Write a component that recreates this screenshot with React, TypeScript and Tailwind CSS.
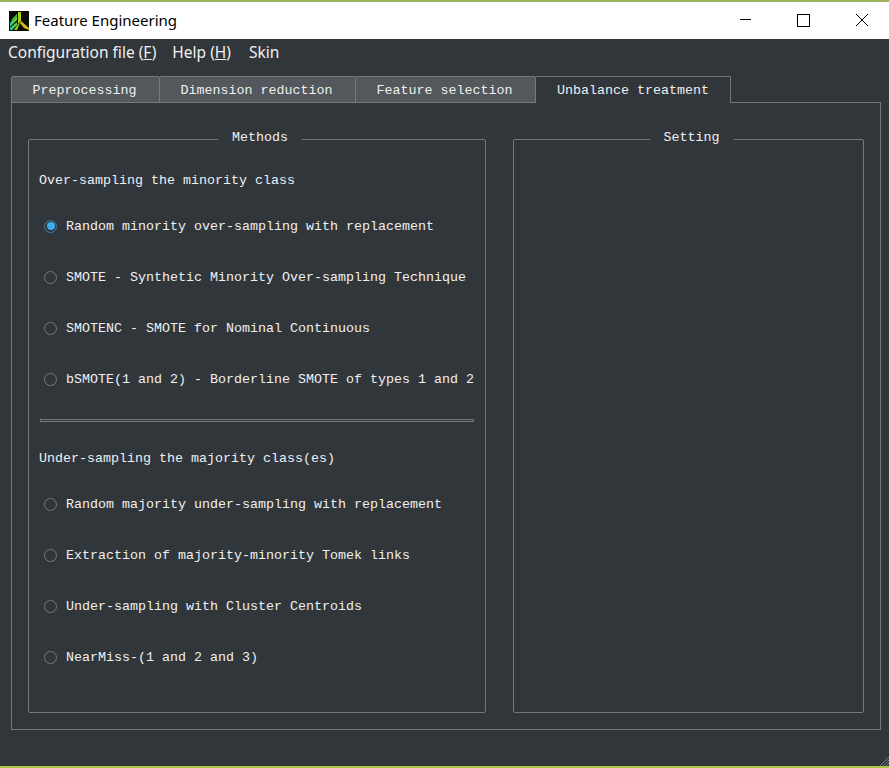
const monoFont = "font-['Liberation_Mono',monospace]";

const minorityOptions = [
  'Random minority over-sampling with replacement',
  'SMOTE - Synthetic Minority Over-sampling Technique',
  'SMOTENC - SMOTE for Nominal Continuous',
  'bSMOTE(1 and 2) - Borderline SMOTE of types 1 and 2',
];

const majorityOptions = [
  'Random majority under-sampling with replacement',
  'Extraction of majority-minority Tomek links',
  'Under-sampling with Cluster Centroids',
  'NearMiss-(1 and 2 and 3)',
];

const tabs = ['Preprocessing', 'Dimension reduction', 'Feature selection'];

function Logo() {
  return (
    <svg width="20" height="20" viewBox="0 0 20 20" className="shrink-0">
      <defs>
        <linearGradient id="fan" x1="0" y1="1" x2="1" y2="0">
          <stop offset="0" stopColor="#12c9a0" />
          <stop offset="1" stopColor="#7fd61e" />
        </linearGradient>
      </defs>
      <rect width="20" height="20" fill="#0c0c06" />
      <path d="M1 12 L8 5 L8 9 L1 16 Z" fill="url(#fan)" />
      <path d="M1 17 L8 11 L8 14 L3 19 L1 19 Z" fill="url(#fan)" />
      <path d="M3 8 L8 3 L8 5 L2 11 Z" fill="#39c83a" />
      <path d="M9 1 L12 1 L12 10 L9 13 Z" fill="#b4cc16" />
      <path d="M12 10 L20 17 L20 19 L15 17 L11 12 Z" fill="#d8b91c" />
      <path d="M9 13 L11 12 L8 19 L5 19 Z" fill="#8ccf1b" />
    </svg>
  );
}

function TitleBar() {
  return (
    <div className="flex h-[39px] items-center border-t-2 border-[#9cb45a] bg-white text-black">
      <div className="ml-[9px]">
        <Logo />
      </div>
      <span className="ml-[5px] font-['Noto_Sans',sans-serif] text-[15px]">Feature Engineering</span>
      <div className="mr-[4px] mb-[1px] ml-auto flex items-center gap-[12px]">
        <svg width="46" height="20" viewBox="0 0 46 20">
          <path d="M17 9.5 H28" stroke="#000" strokeWidth="1" fill="none" />
        </svg>
        <svg width="46" height="20" viewBox="0 0 46 20">
          <rect x="16.5" y="4.5" width="12" height="12" stroke="#000" strokeWidth="1" fill="none" />
        </svg>
        <svg width="46" height="20" viewBox="0 0 46 20">
          <path d="M17 4 L29 16 M29 4 L17 16" stroke="#000" strokeWidth="1" fill="none" />
        </svg>
      </div>
    </div>
  );
}

function MenuBar() {
  return (
    <div className="flex h-[28px] items-center gap-[16px] pb-[1px] pl-[8px] font-['Noto_Sans',sans-serif] text-[15.5px] text-[#eff0f1]">
      <span>
        Configuration file (<span className="underline">F</span>)
      </span>
      <span>
        Help (<span className="underline">H</span>)
      </span>
      <span className="ml-[2px]">Skin</span>
    </div>
  );
}

function RadioRow({ label, checked = false }: { label: string; checked?: boolean }) {
  return (
    <div className="flex h-[51px] items-center">
      <div
        className={`mb-[1px] ml-[15px] flex size-[13px] shrink-0 items-center justify-center rounded-full border-[1.5px] ${
          checked ? 'border-[#3d7fb0]' : 'border-[#76797c]'
        }`}
      >
        {checked && <div className="size-[8px] rounded-full bg-[#3daee9]" />}
      </div>
      <span className="ml-[9px] whitespace-nowrap">{label}</span>
    </div>
  );
}

function GroupBox({ title, className, children }: { title: string; className: string; children?: React.ReactNode }) {
  return (
    <div className={`relative shrink-0 rounded-[2px] border border-[#76797c] ${className}`}>
      <span className="absolute -top-[12px] left-[calc(50%+3px)] -translate-x-1/2 bg-[#31363b] px-[14px] leading-[20px] whitespace-nowrap">
        {title}
      </span>
      {children}
    </div>
  );
}

export default function App() {
  return (
    <div className="flex h-[768px] w-[889px] flex-col overflow-hidden bg-[#31363b] text-[#eff0f1]">
      <TitleBar />
      <MenuBar />
      <div className={`flex flex-1 flex-col pt-[9px] pr-[8px] pl-[11px] text-[13.33px] ${monoFont}`}>
        <div className="flex h-[27px]">
          {tabs.map((tab) => (
            <div
              key={tab}
              className="-mr-px flex items-center rounded-t-[2px] border border-[#76797c] bg-[#54575b] pt-[2px] pr-[22.5px] pl-[20.5px]"
            >
              {tab}
            </div>
          ))}
          <div className="z-10 flex h-[27px] items-center rounded-t-[2px] border border-b-0 border-[#76797c] bg-[#31363b] px-[21px] pt-[2px]">
            Unbalance treatment
          </div>
        </div>
        <div className="-mt-px flex h-[628px] gap-[27px] border border-[#76797c] px-[16px] pt-[36px] pb-[16px]">
          <GroupBox title="Methods" className="w-[458px]">
            <div className="mt-[31px] ml-[10px] leading-[20px]">Over-sampling the minority class</div>
            <div className="mt-[10px]">
              {minorityOptions.map((label, i) => (
                <RadioRow key={label} label={label} checked={i === 0} />
              ))}
            </div>
            <div className="mt-[14px] ml-[11px] h-[3px] w-[434px] border border-[#76797c]" />
            <div className="mt-[27px] ml-[10px] leading-[20px]">Under-sampling the majority class(es)</div>
            <div className="mt-[10px]">
              {majorityOptions.map((label) => (
                <RadioRow key={label} label={label} />
              ))}
            </div>
          </GroupBox>
          <GroupBox title="Setting" className="w-[351px]" />
        </div>
      </div>
      <div className="relative mt-auto h-[2px] bg-[#a9c64a]">
        <svg width="10" height="10" viewBox="0 0 10 10" className="absolute -top-[10px] right-0">
          <path d="M1 10 L10 1 M4 10 L10 4 M7 10 L10 7" stroke="#76797c" strokeWidth="1" fill="none" />
        </svg>
      </div>
    </div>
  );
}
